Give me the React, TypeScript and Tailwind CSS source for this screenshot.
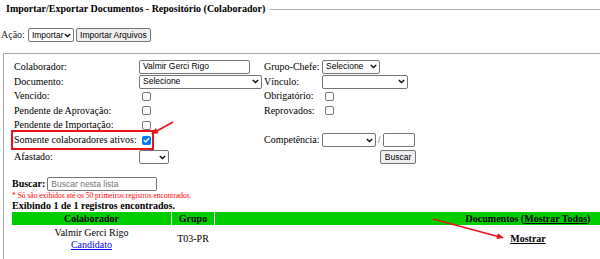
import React from "react";

function Chevron() {
  return (
    <svg width="7" height="5" viewBox="0 0 7 5" className="shrink-0">
      <path d="M0.8 0.9 L3.5 3.6 L6.2 0.9" fill="none" stroke="#111" strokeWidth="1.4" />
    </svg>
  );
}

function Sel({ className, text }: { className: string; text?: string }) {
  return (
    <div
      className={`h-[14px] border border-[#767676] rounded-[2px] bg-white flex items-center justify-between pl-[3px] pr-[2px] text-[8.5px] leading-none text-black font-['Liberation_Sans',sans-serif] ${className}`}
    >
      <span className="whitespace-nowrap">{text ?? ""}</span>
      <Chevron />
    </div>
  );
}

function Inp({ className, text, placeholder }: { className: string; text?: string; placeholder?: string }) {
  return (
    <div
      className={`h-[14px] border border-[#767676] rounded-[2px] bg-white flex items-center pl-[3px] text-[8.5px] leading-none font-['Liberation_Sans',sans-serif] ${className}`}
    >
      {text ? <span className="text-black">{text}</span> : <span className="text-[#757575]">{placeholder}</span>}
    </div>
  );
}

function Btn({ className, text }: { className: string; text: string }) {
  return (
    <div
      className={`h-[14px] border border-[#767676] rounded-[2px] bg-[#efefef] flex items-center justify-center text-[8.5px] leading-none text-black font-['Liberation_Sans',sans-serif] ${className}`}
    >
      {text}
    </div>
  );
}

function Check({ checked }: { checked?: boolean }) {
  if (checked) {
    return (
      <div className="ml-[3px] w-[9px] h-[9px] rounded-[2px] bg-[#0075ff] flex items-center justify-center">
        <svg width="7" height="6" viewBox="0 0 7 6">
          <path d="M0.8 3.1 L2.7 4.9 L6.2 1" fill="none" stroke="#fff" strokeWidth="1.4" />
        </svg>
      </div>
    );
  }
  return <div className="ml-[3px] w-[9px] h-[9px] rounded-[2px] border border-[#767676] bg-white" />;
}

export default function App() {
  const label = "flex items-center whitespace-nowrap";
  const cell = "flex items-center";
  return (
    <div className="relative w-[600px] h-[259px] overflow-hidden bg-white text-black text-[10px] leading-none font-['Liberation_Serif',serif]">
      {/* Title */}
      <div className="h-[18px] flex items-center pl-[6px]">
        <span className="font-bold whitespace-nowrap">Importar/Exportar Documentos - Repositório (Colaborador)</span>
        <div className="flex-1 ml-[5px] h-px bg-[#a9a9a9]" />
      </div>

      {/* Ação row */}
      <div className="mt-[10px] h-[14px] flex items-center pl-[1px]">
        <span className="text-[10px] text-[#222]">Ação:</span>
        <Sel className="ml-[3px] w-[46px]" text="Importar" />
        <Btn className="ml-[2px] w-[75px]" text="Importar Arquivos" />
      </div>

      {/* Box */}
      <div className="mt-[11px] ml-[3px] border-l border-t border-[#a9a9a9] h-[300px] pl-[8px] pt-[5px]">
        <div className="ml-[2px] grid grid-cols-[125px_125px_58px_1fr] grid-rows-[15px_15px_14px_15px_14px_16px_18px]">
          {/* row 1 */}
          <div className={label}>Colaborador:</div>
          <div className={cell}><Inp className="w-[111px]" text="Valmir Gerci Rigo" /></div>
          <div className={label}>Grupo-Chefe:</div>
          <div className={cell}><Sel className="w-[58px]" text="Selecione" /></div>
          {/* row 2 */}
          <div className={label}>Documento:</div>
          <div className={cell}><Sel className="w-[123px]" text="Selecione" /></div>
          <div className={label}>Vínculo:</div>
          <div className={cell}><Sel className="w-[86px]" /></div>
          {/* row 3 */}
          <div className={label}>Vencido:</div>
          <div className={cell}><Check /></div>
          <div className={label}>Obrigatório:</div>
          <div className={cell}><Check /></div>
          {/* row 4 */}
          <div className={label}>Pendente de Aprovação:</div>
          <div className={cell}><Check /></div>
          <div className={label}>Reprovados:</div>
          <div className={cell}><Check /></div>
          {/* row 5 */}
          <div className={label}>Pendente de Importação:</div>
          <div className={cell}><Check /></div>
          <div />
          <div />
          {/* row 6 */}
          <div className={label}>Somente colaboradores ativos:</div>
          <div className={cell}><Check checked /></div>
          <div className={label}>Competência:</div>
          <div className={cell}>
            <Sel className="w-[54px]" />
            <span className="mx-[2px] text-[#888] font-['Liberation_Sans',sans-serif] text-[9px]">/</span>
            <Inp className="w-[32px]" />
          </div>
          {/* row 7 */}
          <div className={label}>Afastado:</div>
          <div className={cell}><Sel className="w-[30px]" /></div>
          <div />
          <div className={cell}><Btn className="ml-[58px] w-[36px]" text="Buscar" /></div>
        </div>

        {/* Buscar filter */}
        <div className="mt-[11px] h-[14px] flex items-center">
          <span className="font-bold">Buscar:</span>
          <Inp className="ml-[2px] w-[110px]" placeholder="Buscar nesta lista" />
        </div>
        <div className="h-[9px] flex items-center text-[7.5px] text-[#ff0000] whitespace-nowrap">
          * Só são exibidos até os 50 primeiros registros encontrados.
        </div>
        <div className="h-[12px] flex items-center font-bold text-[10px] whitespace-nowrap">
          Exibindo 1 de 1 registros encontrados.
        </div>

        {/* Table */}
        <div className="flex gap-[1px] h-[13px] font-bold">
          <div className="w-[159px] shrink-0 bg-[#00cc00] flex items-center justify-center">Colaborador</div>
          <div className="w-[42px] shrink-0 bg-[#00cc00] flex items-center justify-center">Grupo</div>
          <div className="w-[626px] shrink-0 bg-[#00cc00] flex items-center justify-center whitespace-nowrap">
            Documentos (<span className="underline">Mostrar Todos</span>)
          </div>
        </div>
        <div className="flex gap-[1px] h-[26px] mt-[1px]">
          <div className="w-[159px] shrink-0 flex flex-col items-center justify-center">
            <div className="h-[12px] flex items-center">Valmir Gerci Rigo</div>
            <div className="h-[12px] flex items-center text-[#0000ee] underline">Candidato</div>
          </div>
          <div className="w-[42px] shrink-0 flex items-center justify-center">T03-PR</div>
          <div className="w-[626px] shrink-0 flex items-center justify-center font-bold underline">Mostrar</div>
        </div>
      </div>

      {/* Annotation: red box */}
      <div className="absolute left-[11px] top-[130px] w-[143px] h-[20px] border-2 border-[#e8141c] pointer-events-none" />

      {/* Annotation arrows */}
      <svg className="absolute left-0 top-0 pointer-events-none" width="600" height="259" viewBox="0 0 600 259">
        <line x1="173" y1="122" x2="156" y2="131.5" stroke="#e8141c" strokeWidth="1.8" />
        <polygon points="151,134 158.6,133.2 155.8,128" fill="#e8141c" />
        <line x1="433" y1="219" x2="498" y2="236.5" stroke="#e8141c" strokeWidth="1.8" />
        <polygon points="504,238 496.4,239.1 498,233.3" fill="#e8141c" />
      </svg>
    </div>
  );
}
